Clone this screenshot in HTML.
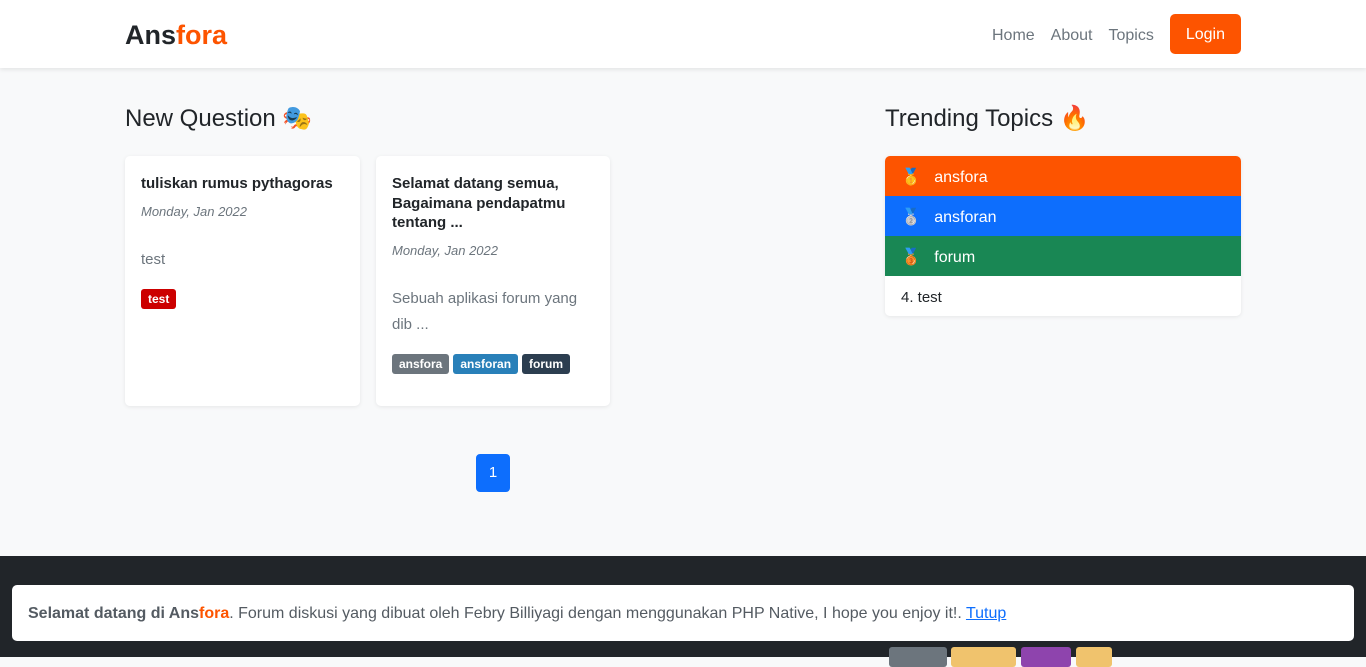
<!DOCTYPE html>
<html><head><meta charset="utf-8"><style>
*{box-sizing:border-box;margin:0;padding:0}
body{width:1366px;height:657px;overflow:hidden;background:#f8f9fa;font-family:"Liberation Sans","DejaVu Sans",sans-serif;color:#212529;position:relative}
.nav{position:absolute;top:0;left:0;right:0;height:68px;background:#fff;box-shadow:0 2px 4px rgba(0,0,0,.08)}
.logo{position:absolute;left:125px;top:20px;font-size:27px;font-weight:bold;color:#212529}
.logo span{color:#fd5400}
.links{position:absolute;right:125px;top:14px;display:flex;align-items:center}
.links a{color:#6c757d;font-size:16px;margin-right:16px;text-decoration:none;position:relative;top:2px}
.btn{background:#fd5400;color:#fff!important;border-radius:5px;padding:2px 16px 0;height:40px;line-height:38px;margin-right:0!important;top:0!important}
h2{position:absolute;font-size:24px;font-weight:500;top:104px}
.card{position:absolute;top:156px;background:#fff;border-radius:5px;box-shadow:0 1px 4px rgba(0,0,0,.08);height:250px;width:235px;padding:18px 16px}
.card h5{font-size:15px;font-weight:bold;line-height:19.5px}
.date{font-style:italic;color:#6c757d;font-size:13px;margin-top:10px}
.txt{color:#6c757d;font-size:15px;line-height:26px}
.b{display:inline-block;color:#fff;font-size:12px;font-weight:bold;padding:3px 7px;border-radius:3px;margin-right:4px}
.tl{position:absolute;left:885px;top:156px;width:356px;border-radius:5px;overflow:hidden;box-shadow:0 1px 4px rgba(0,0,0,.08)}
.tl div{height:40px;line-height:40px;color:#fff;font-size:16px;padding-left:16px;padding-top:2px}
.pg{position:absolute;left:476px;top:454px;width:34px;height:38px;background:#0d6efd;color:#fff;border-radius:4px;text-align:center;line-height:38px;font-size:15px}
.foot{position:absolute;top:556px;left:0;right:0;bottom:0;background:#212529}
.alert{position:absolute;left:12px;top:585px;width:1342px;height:56px;background:#fff;border-radius:5px;padding-left:16px;line-height:57px;font-size:16px;color:#545b62}
.alert a{color:#0d6efd;text-decoration:underline}
.fb{position:absolute;top:647px;height:20px;border-radius:3px}
</style></head><body>
<div class="nav"><div class="logo">Ans<span>fora</span></div>
<div class="links"><a>Home</a><a>About</a><a>Topics</a><a class="btn">Login</a></div></div>
<h2 style="left:125px">New Question 🎭</h2>
<h2 style="left:885px">Trending Topics 🔥</h2>
<div class="card" style="left:125px"><h5>tuliskan rumus pythagoras</h5><div class="date">Monday, Jan 2022</div><div class="txt" style="margin-top:28px">test</div><div style="margin-top:16px"><span class="b" style="background:#c00">test</span></div></div>
<div class="card" style="left:376px;width:234px"><h5>Selamat datang semua, Bagaimana pendapatmu tentang ...</h5><div class="date">Monday, Jan 2022</div><div class="txt" style="margin-top:28px">Sebuah aplikasi forum yang dib ...</div><div style="margin-top:16px"><span class="b" style="background:#6c757d">ansfora</span><span class="b" style="background:#2980b9">ansforan</span><span class="b" style="background:#2c3e50">forum</span></div></div>
<div class="tl"><div style="background:#fd5400">🥇&nbsp;&nbsp; ansfora</div><div style="background:#0d6efd">🥈&nbsp;&nbsp; ansforan</div><div style="background:#198754">🥉&nbsp;&nbsp; forum</div><div style="background:#fff;color:#212529;font-size:15px">4. test</div></div>
<div class="pg">1</div>
<div class="foot"></div>
<div class="fb" style="left:889px;width:58px;background:#6c757d"></div>
<div class="fb" style="left:951px;width:65px;background:#f0c36d"></div>
<div class="fb" style="left:1021px;width:50px;background:#8e44ad"></div>
<div class="fb" style="left:1076px;width:36px;background:#f0c36d"></div>
<div class="alert"><b>Selamat datang di Ans<span style="color:#fd5400">fora</span></b>. Forum diskusi yang dibuat oleh Febry Billiyagi dengan menggunakan PHP Native, I hope you enjoy it!. <a>Tutup</a></div>
</body></html>
